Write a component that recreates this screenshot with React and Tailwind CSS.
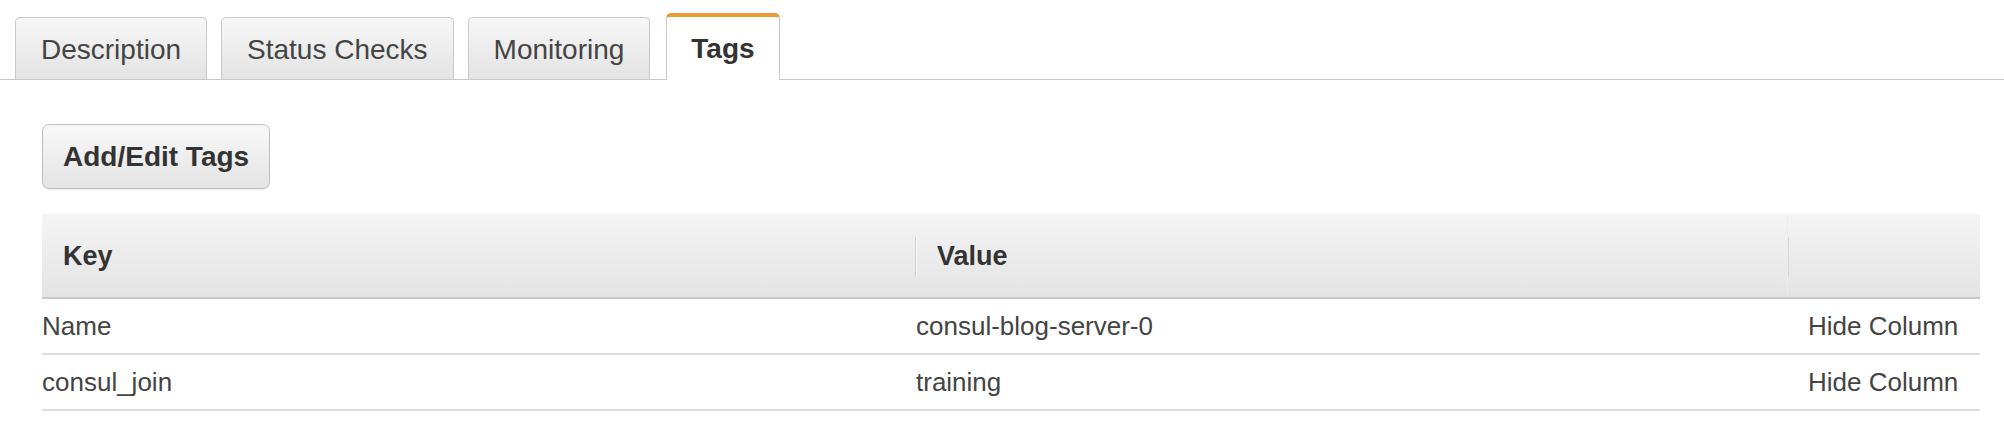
import React from 'react';

const tabs = ['Description', 'Status Checks', 'Monitoring', 'Tags'];

const tags = [
  { key: 'Name', value: 'consul-blog-server-0' },
  { key: 'consul_join', value: 'training' },
];

const App = () => {
  const active = 'Tags';

  return (
    <div
      className="w-full h-[438px] bg-white text-[#444]"
      style={{ fontFamily: '"Liberation Sans", Arial, sans-serif' }}
    >
      {/* tab strip */}
      <div className="flex items-end gap-[14px] pl-[15px] pt-[13px] border-b border-[#c9c9c9]">
        {tabs.map((tab) =>
          tab === active ? (
            <div
              key={tab}
              className="h-[67px] -mb-px ml-[2px] px-[24px] flex items-center bg-white border border-b-0 border-[#c9c9c9] border-t-[4px] border-t-[#ec9c34] rounded-t-[5px] text-[28px] font-bold text-[#333]"
            >
              {tab}
            </div>
          ) : (
            <div
              key={tab}
              className="h-[62px] px-[25px] pt-[3px] flex items-center bg-gradient-to-b from-[#f7f7f7] to-[#e3e3e3] border border-b-0 border-[#c9c9c9] rounded-t-[5px] text-[28px]"
            >
              {tab}
            </div>
          )
        )}
      </div>

      <div className="pl-[42px] pr-[24px]">
        <button className="mt-[44px] h-[65px] px-[20px] rounded-[7px] border border-[#bfbfbf] bg-gradient-to-b from-[#f8f8f8] to-[#e4e4e4] text-[28px] font-bold text-[#333] shadow-[0_1px_1px_rgba(0,0,0,0.08)]">
          Add/Edit Tags
        </button>

        {/* tags table */}
        <div className="mt-[25px]">
          <div className="grid grid-cols-[873px_872px_1fr] h-[85px] pt-[2px] bg-gradient-to-b from-[#f4f4f4] to-[#e4e4e4] border-b-2 border-[#c8c8c8] text-[27px] font-bold text-[#333]">
            <div className="flex items-center pl-[21px]">Key</div>
            <div className="flex items-center">
              <div className="h-[40px] w-[1px] bg-[#cfcfcf] shadow-[1px_0_0_#fafafa]" />
              <span className="ml-[21px]">Value</span>
            </div>
            <div className="flex items-center border-l border-[#ececec]">
              <div className="h-[40px] w-[1px] bg-[#d6d6d6]" />
            </div>
          </div>

          {tags.map((tag) => (
            <div
              key={tag.key}
              className="grid grid-cols-[873px_872px_1fr] h-[56px] border-b-2 border-[#dedede] text-[26px] text-[#444]"
            >
              <div className="flex items-center">{tag.key}</div>
              <div className="flex items-center pl-[1px]">{tag.value}</div>
              <div className="flex items-center pl-[21px]">Hide Column</div>
            </div>
          ))}
        </div>
      </div>
    </div>
  );
};

export default App;
